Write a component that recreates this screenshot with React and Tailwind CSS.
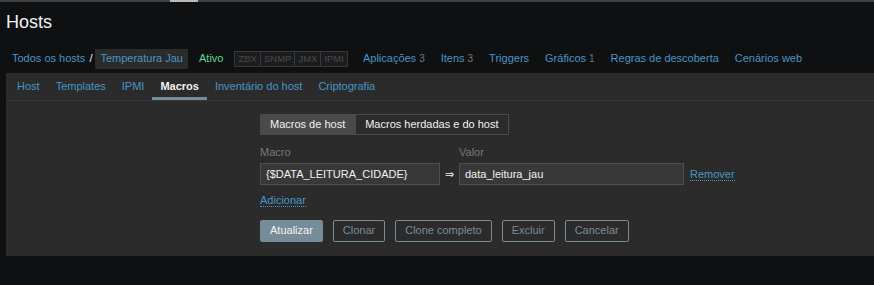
import React from 'react';

const navLinks = [
  { label: 'Aplicações', count: '3' },
  { label: 'Itens', count: '3' },
  { label: 'Triggers' },
  { label: 'Gráficos', count: '1' },
  { label: 'Regras de descoberta' },
  { label: 'Cenários web' },
];

const tabs = ['Host', 'Templates', 'IPMI', 'Macros', 'Inventário do host', 'Criptografia'];

export default function App() {
  return (
    <div className="min-h-screen w-full bg-[#0e1012] text-[11px] text-[#f2f2f2] font-['Liberation_Sans',Arial,sans-serif] overflow-hidden">
      {/* top strip */}
      <div className="flex h-[2px] bg-[#3f4042]">
        <div className="w-[170px]"></div>
        <div className="w-[28px] bg-[#b8b8b8]"></div>
      </div>

      {/* title */}
      <div className="h-[42px] px-[6px] pt-[9px]">
        <h1 className="text-[18px] leading-[22px] text-[#f2f2f2]">Hosts</h1>
      </div>

      {/* host navigation */}
      <div className="flex items-center h-[21px] mt-[4px] pl-[12px]">
        <a className="text-[#4796c4]">Todos os hosts</a>
        <span className="ml-[4px] mr-[3px] text-[#f2f2f2]">/</span>
        <div className="h-[20px] flex items-center px-[5px] bg-[#2b2b2b] text-[#4796c4]">Temperatura Jau</div>
        <span className="ml-[11px] text-[#59db8f]">Ativo</span>
        <div className="ml-[11px] flex h-[16px] border border-[#383838] bg-[#1b1c1e] text-[#4a4a4a] text-[9.5px] leading-[14px]">
          <span className="px-[3px]">ZBX</span>
          <span className="px-[3px] border-l border-[#383838]">SNMP</span>
          <span className="px-[3px] border-l border-[#383838]">JMX</span>
          <span className="px-[3px] border-l border-[#383838]">IPMI</span>
        </div>
        <div className="flex items-center ml-[15px] gap-[16px]">
          {navLinks.map((l) => (
            <a key={l.label} className="text-[#4796c4]">
              {l.label}
              {l.count && <span className="ml-[3px] text-[#787878] text-[10px]">{l.count}</span>}
            </a>
          ))}
        </div>
      </div>

      {/* tab panel */}
      <div className="ml-[6px] mt-[4px] bg-[#2b2b2b]">
        <div className="flex h-[28px] pl-[3px] border-b border-[#383838]">
          {tabs.map((t) => (
            <div
              key={t}
              className={
                t === 'Macros'
                  ? 'px-[8px] flex items-center border-b-[3px] border-[#768d99] pt-[3px] font-bold text-[#f2f2f2]'
                  : 'px-[8px] flex items-center text-[#4796c4]'
              }
            >
              {t}
            </div>
          ))}
        </div>

        <div className="pl-[254px] pt-[13px] pb-[14px]">
          {/* segmented control */}
          <div className="flex h-[21px]">
            <div className="flex items-center px-[9px] bg-[#4a4a4a] border border-[#4a4a4a] text-[#f2f2f2]">Macros de host</div>
            <div className="flex items-center px-[9px] border border-[#4a4a4a] text-[#f2f2f2]">Macros herdadas e do host</div>
          </div>

          {/* labels */}
          <div className="flex mt-[10px] text-[#787878] leading-[14px]">
            <span className="w-[199px]">Macro</span>
            <span>Valor</span>
          </div>

          {/* inputs */}
          <div className="flex items-center mt-[4px]">
            <div className="w-[180px] h-[22px] flex items-center px-[5px] bg-[#383838] border border-[#4f4f4f] text-[#f2f2f2]">{'{$DATA_LEITURA_CIDADE}'}</div>
            <span className="w-[19px] text-center text-[#f2f2f2]">⇒</span>
            <div className="w-[225px] h-[22px] flex items-center px-[5px] bg-[#383838] border border-[#4f4f4f] text-[#f2f2f2]">data_leitura_jau</div>
            <a className="ml-[6px] text-[#4796c4] border-b border-dotted border-[#4796c4] leading-[12px]">Remover</a>
          </div>

          <div className="mt-[7px]">
            <a className="text-[#4796c4] border-b border-dotted border-[#4796c4] leading-[12px]">Adicionar</a>
          </div>

          {/* buttons */}
          <div className="flex gap-[10px] mt-[11px]">
            <button className="h-[22px] px-[9px] bg-[#768d99] border border-[#768d99] text-[#f2f2f2] rounded-[2px]">Atualizar</button>
            <button className="h-[22px] px-[9px] border border-[#768d99] text-[#768d99] rounded-[2px]">Clonar</button>
            <button className="h-[22px] px-[9px] border border-[#768d99] text-[#768d99] rounded-[2px]">Clone completo</button>
            <button className="h-[22px] px-[9px] border border-[#768d99] text-[#768d99] rounded-[2px]">Excluir</button>
            <button className="h-[22px] px-[9px] border border-[#768d99] text-[#768d99] rounded-[2px]">Cancelar</button>
          </div>
        </div>
      </div>
    </div>
  );
}
